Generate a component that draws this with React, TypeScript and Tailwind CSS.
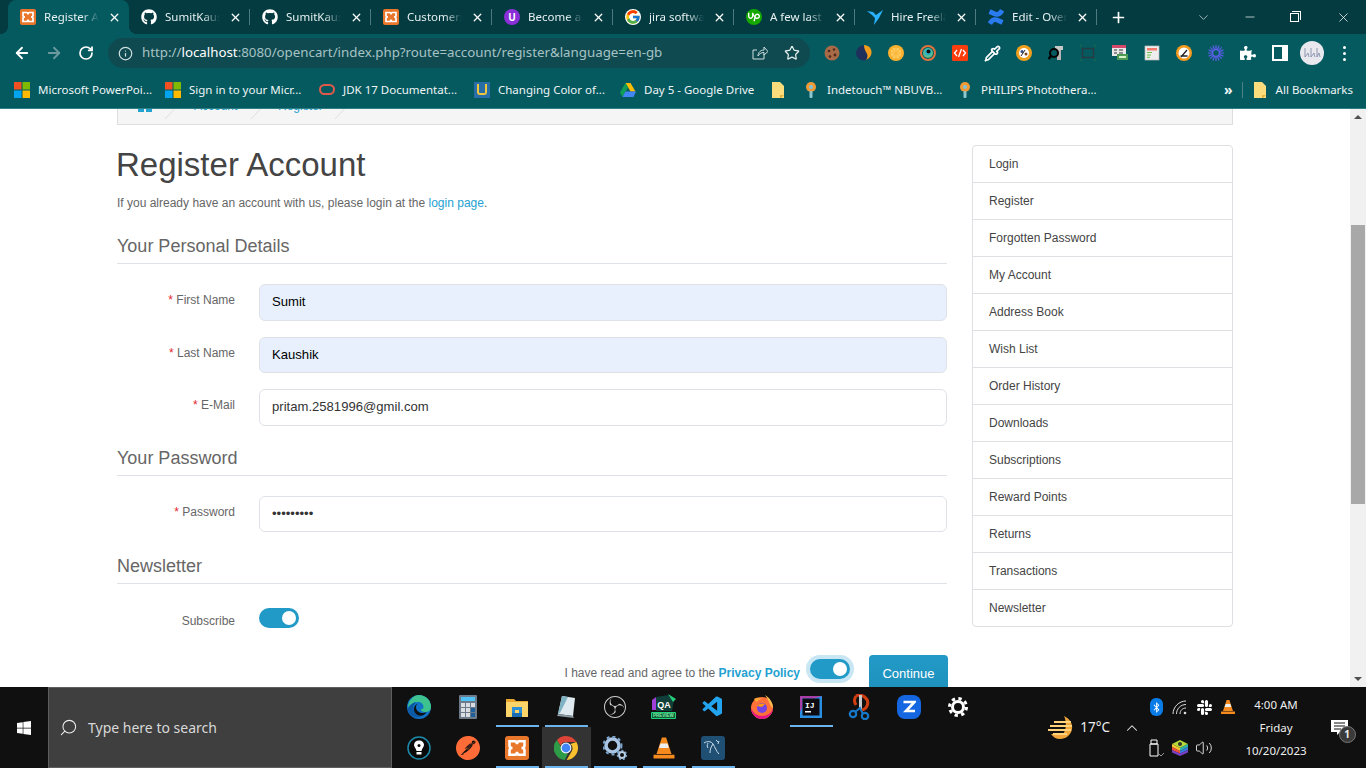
import { ArrowLeft, ArrowRight, ChevronDown, ChevronUp, Info, Minus, Pipette, Plus, RotateCw, Search, Star, Volume2, X } from 'lucide-react';
import type { ReactNode } from 'react';
import { FaBluetoothB, FaGithub, FaPuzzlePiece, FaWindows } from 'react-icons/fa';
import { FcGoogle } from 'react-icons/fc';
import { SiConfluence, SiObsstudio, SiPostman, SiSlack, SiUpwork } from 'react-icons/si';
import { VscVscode } from 'react-icons/vsc';

const Xampp = ({ size = 16 }: { size?: number }) => (
  <svg width={size} height={size} viewBox="0 0 16 16">
    <rect width="16" height="16" rx="2" fill="#e8762b" />
    <path
      d="M3 3.500h3.500c1 0 1.500 1 1.500 2 0-1 .5-2 1.500-2H13v3c0 .8-.8 1.500-2 1.500 1.200 0 2 .7 2 1.500v3H9.500c-1 0-1.500-1-1.500-2 0 1-.5 2-1.500 2H3v-3c0-.8.8-1.500 2-1.500-1.200 0-2-.7-2-1.500z"
      fill="none"
      stroke="#fff"
      strokeWidth="1.700"
    />
  </svg>
);

const Windows4 = () => (
  <svg width="16" height="16" viewBox="0 0 16 16">
    <rect x="0" y="0" width="7.500" height="7.500" fill="#f25022" />
    <rect x="8.500" y="0" width="7.500" height="7.500" fill="#7fba00" />
    <rect x="0" y="8.500" width="7.500" height="7.500" fill="#00a4ef" />
    <rect x="8.500" y="8.500" width="7.500" height="7.500" fill="#ffb900" />
  </svg>
);

const Folder = () => (
  <svg width="14" height="18" viewBox="0 0 14 18">
    <path d="M1 1h8l4 4v12H1z" fill="#fbdc7c" />
    <path d="M9 14h4l-3 3H9z" fill="#e3b23c" />
  </svg>
);

const Pin = () => (
  <svg width="14" height="18" viewBox="0 0 14 18">
    <circle cx="7" cy="6" r="5" fill="#f09a37" />
    <circle cx="7" cy="6" r="2" fill="#7fc4d8" />
    <rect x="5.500" y="10" width="3" height="7" rx="1" fill="#8fc7cf" />
  </svg>
);

const Cone = ({ size = 16 }: { size?: number }) => (
  <svg width={size} height={size} viewBox="0 0 16 16">
    <path d="M6.600 1h2.800l3.600 11H3z" fill="#f58a1f" />
    <path d="M5.600 5h4.800l.8 3H4.700z" fill="#eeeeee" />
    <path d="M1 12.500h14v2.500H1z" fill="#f58a1f" />
  </svg>
);

const Chrome = () => (
  <svg width="24" height="24" viewBox="0 0 24 24">
    <path d="M12 0a12 12 0 0 1 10.400 6H12a6 6 0 0 0-5.600 3.800L3 3.900A12 12 0 0 1 12 0z" fill="#db4437" />
    <path d="M22.400 6A12 12 0 0 1 12.600 24l5-8.600A6 6 0 0 0 16.500 8z" fill="#fbc02d" />
    <path d="M3 3.900l5.200 9A5 5 0 0 0 14 17.600L10.700 24A12 12 0 0 1 3 3.900z" fill="#2e9b46" />
    <circle cx="12" cy="12" r="5.400" fill="#fff" />
    <circle cx="12" cy="12" r="4.400" fill="#4285f4" />
  </svg>
);

const Edge = () => (
  <svg width="24" height="24" viewBox="0 0 24 24">
    <circle cx="12" cy="12" r="12" fill="#1073c8" />
    <path d="M12 0a12 12 0 0 1 12 12c0 4-3 5-6 5-2.600 0-4-1-4.500-3 1.500.5 3 0 3-2C16.500 9 14 7 11 7 6 7 3 10 1 13 1 6 6 0 12 0z" fill="#3ec28f" />
    <path d="M11 7c-3 0-5 3-4.500 7 .5 4 4 7 8 7-1.500 1-3 1.500-4.500 1.500C5 22.500.5 18 1 13c2-3 5-6 10-6z" fill="#0c59a4" />
    <path d="M9 12c0 3.500 3 6 6.500 6 1.500 0 3-.3 4-1-.8 2-3.500 4-6 3.800C9.500 20.500 6.500 17 7 13.500 7.300 11 9 9 11 8.500 9.800 9.500 9 10.500 9 12z" fill="#101010" />
  </svg>
);

const Explorer = () => (
  <svg width="22" height="20" viewBox="0 0 22 20">
    <path d="M0 2h8l2 2h12v4H0z" fill="#e8a72e" />
    <path d="M0 5h22v15H0z" fill="#fbd569" />
    <path d="M6 10h10v6h-3v-3H9v3H6z" fill="#2e8fd9" />
    <path d="M6 16h10v4H6z" fill="#1a6cb0" />
  </svg>
);

const Calc = () => (
  <svg width="18" height="24" viewBox="0 0 18 24">
    <rect width="18" height="24" rx="1" fill="#6c7a89" />
    <rect x="2" y="2" width="14" height="4" fill="#4fc3f7" />
    {[0, 1, 2].map((r) =>
      [0, 1, 2].map((c) => <rect key={`${r}${c}`} x={2 + c * 5} y={8 + r * 5} width="4" height="4" fill={c === 2 && r > 0 ? '#1f5f9c' : '#d8dee4'} />),
    )}
  </svg>
);

const Notepad = () => (
  <svg width="24" height="24" viewBox="0 0 24 24">
    <path d="M8 1l13 2-2 18-15-2z" fill="#dfeaf0" />
    <path d="M8 1l6 1-8 16-2 1z" fill="#7fb3c4" />
    <path d="M4 19l15 2 1 2-17-2z" fill="#8a9aa3" />
  </svg>
);

const Pen = () => (
  <svg width="24" height="24" viewBox="0 0 24 24">
    <circle cx="12" cy="12" r="11" fill="#0a0a0a" stroke="#1c8aa8" strokeWidth="1.500" />
    <path d="M12 4.500c3 0 5 2 5 4.500 0 2-2 3-2.500 6h-5C9 12 7 11 7 9c0-2.500 2-4.500 5-4.500z" fill="#fff" />
    <circle cx="12" cy="9.500" r="1.500" fill="#0a0a0a" />
    <rect x="9.500" y="16" width="5" height="2.500" fill="#fff" />
  </svg>
);

const Gears = () => (
  <svg width="24" height="24" viewBox="0 0 24 24">
    <circle cx="9.500" cy="9.500" r="6.500" fill="none" stroke="#a9c6e4" strokeWidth="3.500" />
    <circle cx="9.500" cy="9.500" r="9" fill="none" stroke="#7ba3cc" strokeWidth="2" strokeDasharray="3 3" />
    <circle cx="19" cy="19" r="3" fill="none" stroke="#b9d0e6" strokeWidth="2" />
    <circle cx="19" cy="19" r="4.500" fill="none" stroke="#7ba3cc" strokeWidth="1.500" strokeDasharray="2 2" />
  </svg>
);

const Qa = () => (
  <svg width="26" height="26" viewBox="0 0 26 26">
    <path d="M1 6l4-3v13H1z" fill="#a03fd8" />
    <path d="M5 3l13-2 5 5-2 11H5z" fill="#0f3f38" />
    <path d="M17 0l8 5-3 3z" fill="#26d07c" />
    <text x="13" y="14" textAnchor="middle" fontSize="9" fontWeight="700" fill="#fff" fontFamily="Liberation Sans">QA</text>
    <rect x="0" y="18" width="25" height="7" rx="1" fill="#21d07a" />
    <rect x="1" y="19" width="23" height="5" fill="#0f5f38" />
    <text x="12.500" y="23.300" textAnchor="middle" fontSize="4.500" fontWeight="700" fill="#7ff0a8" fontFamily="Liberation Sans">PREVIEW</text>
  </svg>
);

const Firefox = () => (
  <svg width="24" height="24" viewBox="0 0 24 24">
    <circle cx="12" cy="13" r="11" fill="#ff7139" />
    <path d="M1 13c0 6 5 11 11 11s11-5 11-11c-1 5-6 8-11 8S3 18 1 13z" fill="#e31587" />
    <path d="M15 0c5 3 8 8 8 13-3-1-3-6-8-13z" fill="#ffbd4f" />
    <path d="M4 4c2-1 5-2 8 0-3 0-4 2-5 3-1 0-2-1-3-3z" fill="#ffa436" />
    <circle cx="12" cy="13" r="5" fill="#7542e5" />
    <path d="M7 11c2-3 6-3 8-2l-3 3z" fill="#ff980e" />
  </svg>
);

const Idea = () => (
  <svg width="22" height="22" viewBox="0 0 22 22">
    <rect width="22" height="22" fill="#2a8fe0" />
    <path d="M0 0h22l-8 2.500H2.500V11L0 16z" fill="#a83fa8" />
    <rect x="2.500" y="2.500" width="17" height="17" fill="#0c0c10" />
    <rect x="5" y="15" width="6" height="1.500" fill="#fff" />
    <text x="5" y="11.500" fontSize="8" fontWeight="700" fill="#fff" fontFamily="Liberation Mono">IJ</text>
  </svg>
);

const Snip = () => (
  <svg width="24" height="26" viewBox="0 0 24 26">
    <path d="M8 2c6-3 14 3 11 10-1 2-3 4-6 4" fill="none" stroke="#cf3d10" strokeWidth="3" />
    <path d="M8 2c-2 3-2 6 0 9" fill="none" stroke="#cf3d10" strokeWidth="3" />
    <path d="M11 1h3v14h-3z" fill="#c9c9c9" />
    <circle cx="5" cy="20" r="3.200" fill="none" stroke="#1878c8" strokeWidth="2.200" />
    <circle cx="17" cy="22" r="3.200" fill="none" stroke="#1878c8" strokeWidth="2.200" />
    <path d="M7 18l5-4 3 6" fill="none" stroke="#1878c8" strokeWidth="2" />
  </svg>
);

const Zoho = () => (
  <span className="flex h-6 w-6 items-center justify-center rounded-[8px] bg-[#1467e0]">
    <svg width="14" height="14" viewBox="0 0 14 14">
      <path d="M1.500 2h11L4 11h9" fill="none" stroke="#fff" strokeWidth="2.600" />
    </svg>
  </span>
);

const Gear = () => (
  <svg width="20" height="20" viewBox="0 0 20 20">
    <circle cx="10" cy="10" r="5.500" fill="none" stroke="#fff" strokeWidth="3" />
    <circle cx="10" cy="10" r="8.500" fill="none" stroke="#fff" strokeWidth="3" strokeDasharray="3.300 3.400" />
  </svg>
);

const Dolphin = () => (
  <span className="flex h-6 w-6 items-center justify-center rounded-[3px] bg-[#1f4f73]">
    <svg width="20" height="20" viewBox="0 0 20 20">
      <path d="M1 5c3-2 7-2 9 1 2 3 3 7 6 10M10 6c-2 3-3 5-3 9M5 5c-1 2-1 4 0 5M13 2l3 3M16 3l-1 3" fill="none" stroke="#c8dbe8" strokeWidth="1" />
    </svg>
  </span>
);

const Extension = ({ children }: { children: ReactNode }) => (
  <svg width="16" height="16" viewBox="0 0 16 16">
    {children}
  </svg>
);

const extensionIcons = [
  <Extension key="cookie">
    <circle cx="8" cy="8" r="7.500" fill="#a86a47" />
    <circle cx="5" cy="6" r="1.300" fill="#4a2a1c" />
    <circle cx="10" cy="4.500" r="1.200" fill="#4a2a1c" />
    <circle cx="11" cy="10" r="1.400" fill="#4a2a1c" />
    <circle cx="6" cy="11.500" r="1.300" fill="#4a2a1c" />
  </Extension>,
  <Extension key="sync">
    <circle cx="7.500" cy="8" r="7.500" fill="#20305c" />
    <path d="M8 0c5 0 8 4 7.500 8S12 14 10 15c2-3 2-5 0-8-1-2-2-4-2-7z" fill="#f59d1c" />
  </Extension>,
  <Extension key="orange">
    <circle cx="8" cy="8" r="8" fill="#fbb02d" />
    <circle cx="8" cy="8" r="5.500" fill="#ffc95c" />
    <path d="M8 2v12M2 8h12M4 4l8 8M12 4l-8 8" stroke="#fbb02d" strokeWidth=".7" />
  </Extension>,
  <Extension key="ring">
    <circle cx="8" cy="8" r="7" fill="none" stroke="#e2713d" strokeWidth="2" />
    <circle cx="8" cy="8" r="5" fill="#5fb98a" />
    <circle cx="8" cy="7" r="3.500" fill="#27b6c6" />
    <circle cx="8.500" cy="6.500" r="2" fill="#111" />
  </Extension>,
  <Extension key="code">
    <rect width="16" height="16" rx="1.500" fill="#fb3d0e" />
    <path d="M5 5L2.500 8 5 11M11 5l2.500 3-2.500 3M9.500 4l-3 8" fill="none" stroke="#fff" strokeWidth="1.300" />
  </Extension>,
  <span key="pipette" className="text-white">
    <Pipette size={17} strokeWidth={2.4} />
  </span>,
  <Extension key="palette">
    <circle cx="8" cy="8" r="8" fill="#f0a01c" />
    <circle cx="8" cy="8" r="5" fill="#fff" />
    <circle cx="6" cy="6.500" r="1.500" fill="#344a86" />
    <circle cx="10" cy="9" r="1.500" fill="#7a4420" />
    <path d="M5 11l4-6" stroke="#222" strokeWidth="1" />
  </Extension>,
  <Extension key="magnifier">
    <rect x="7" y="1" width="8" height="4" fill="#c8c8c8" />
    <rect x="9" y="5" width="4" height="10" fill="#b5b5b5" />
    <circle cx="6" cy="8" r="4" fill="#055a60" stroke="#000" strokeWidth="2" />
    <path d="M3 11l-2.500 3" stroke="#000" strokeWidth="2.400" />
  </Extension>,
  <Extension key="frame">
    <rect x="2.500" y="3.500" width="11" height="9" fill="none" stroke="#263c40" strokeWidth="1.500" />
    <path d="M0 3V0h3M13 0h3v3M0 13v3h3M13 16h3v-3" fill="none" stroke="#1d6b45" strokeWidth="1" />
  </Extension>,
  <Extension key="table">
    <rect x="0" y="0" width="14" height="11" fill="#e9e9e9" />
    <rect x="0" y="0" width="14" height="3" fill="#d4486a" />
    <path d="M2 5h3M7 5h4M2 8h3M7 8h4" stroke="#333" strokeWidth="1.200" />
    <rect x="5" y="9" width="11" height="6" fill="#4a9a55" />
    <rect x="7" y="11" width="7" height="2" fill="#d8f0c8" />
  </Extension>,
  <Extension key="note">
    <rect x="1" y="1" width="14" height="14" fill="#eee" stroke="#bbb" strokeWidth=".7" />
    <rect x="3" y="3" width="10" height="2.500" fill="#f47a6e" />
    <path d="M3 7.500h5M3 10h4M3 12.300h3" stroke="#6abf4b" strokeWidth="1" />
  </Extension>,
  <Extension key="badge">
    <circle cx="8" cy="8" r="8" fill="#f59a1c" />
    <circle cx="8" cy="8" r="5.500" fill="#fff" />
    <path d="M5 12l6-7M4.500 11h7" stroke="#222" strokeWidth="1.300" />
  </Extension>,
  <Extension key="spark">
    <path d="M8 0v16M0 8h16M2.300 2.300l11.400 11.400M13.700 2.300L2.300 13.700M4.900.6l6.200 14.800M11.100.6L4.900 15.400M.6 4.900l14.800 6.200M.6 11.100l14.800-6.200" stroke="#5a5fe8" strokeWidth="1.200" />
    <circle cx="8" cy="8" r="3.500" fill="#055a60" stroke="#5a5fe8" strokeWidth="1.500" />
  </Extension>,
  <FaPuzzlePiece key="puzzle" className="text-white" size={16} />,
  <span key="panel" className="flex h-[16px] w-[16px] justify-start border-[2px] border-r-[6px] border-white" />,
  <span key="avatar" className="flex h-6 w-6 items-center justify-center rounded-full bg-[#e8e8ee]">
    <svg width="18" height="12" viewBox="0 0 18 12">
      <path d="M2 1v9l3-4 1 4M8 1v9l3-4 1 4M14 1v9l2-4 1 4" fill="none" stroke="#7a86a6" strokeWidth=".8" />
    </svg>
  </span>,
  <span key="dots" className="flex flex-col gap-[3px]">
    <span className="h-[3px] w-[3px] rounded-full bg-white" />
    <span className="h-[3px] w-[3px] rounded-full bg-white" />
    <span className="h-[3px] w-[3px] rounded-full bg-white" />
  </span>,
];

const tabs: { title: string; icon: ReactNode }[] = [
  { title: 'Register Account', icon: <Xampp /> },
  { title: 'SumitKaushik', icon: <FaGithub size={16} className="text-white" /> },
  { title: 'SumitKaushik', icon: <FaGithub size={16} className="text-white" /> },
  { title: 'Customers', icon: <Xampp /> },
  {
    title: 'Become a',
    icon: (
      <span className="flex h-4 w-4 items-center justify-center rounded-full bg-[#8b2fd8] text-[10px] font-bold text-white">
        U
      </span>
    ),
  },
  { title: 'jira software', icon: <FcGoogle size={16} className="rounded-full bg-white" /> },
  {
    title: 'A few last',
    icon: (
      <span className="flex h-4 w-4 items-center justify-center rounded-full bg-[#14a800]">
        <SiUpwork size={12} className="text-white" />
      </span>
    ),
  },
  {
    title: 'Hire Freelancers',
    icon: (
      <svg width="16" height="16" viewBox="0 0 16 16">
        <path d="M0 2l6 1 3 3 7-5-4 8-5 7 1-7-3-3z" fill="#29b2fe" />
      </svg>
    ),
  },
  { title: 'Edit - Overview', icon: <SiConfluence size={16} className="text-[#2a7bf0]" /> },
];

const bookmarks: { title: string; icon: ReactNode; w: string }[] = [
  { title: 'Microsoft PowerPoi...', icon: <Windows4 />, w: 'w-[151px]' },
  { title: 'Sign in to your Micr...', icon: <Windows4 />, w: 'w-[154px]' },
  {
    title: 'JDK 17 Documentat...',
    icon: <span className="h-[11px] w-4 rounded-full border-2 border-[#e2594b]" />,
    w: 'w-[155px]',
  },
  {
    title: 'Changing Color of...',
    icon: (
      <span className="flex h-4 w-4 justify-center bg-[#2a6ea8] pt-[2px]">
        <span className="h-[11px] w-[10px] rounded-b-[3px] border-x-2 border-b-2 border-[#f0c63a]" />
      </span>
    ),
    w: 'w-[146px]',
  },
  {
    title: 'Day 5 - Google Drive',
    icon: (
      <svg width="16" height="14" viewBox="0 0 16 14">
        <path d="M5.500 0h5l5 8.500h-5z" fill="#fbbc04" />
        <path d="M5.500 0L0 9.500 2.500 14l5.500-9.500z" fill="#0f9d58" />
        <path d="M2.500 14h11l2.500-5.500H5.500z" fill="#4285f4" />
      </svg>
    ),
    w: 'w-[150px]',
  },
  { title: '', icon: <Folder />, w: 'w-[33px]' },
  { title: 'Indetouch™ NBUVB...', icon: <Pin />, w: 'w-[154px]' },
  { title: 'PHILIPS Photothera...', icon: <Pin />, w: 'w-[267px]' },
];

const taskIcons: { icon: ReactNode; bar?: boolean; active?: boolean }[] = [
  { icon: <Edge /> },
  { icon: <Calc /> },
  { icon: <Explorer />, bar: true },
  { icon: <Notepad />, bar: true },
  { icon: <SiObsstudio size={22} className="text-[#cfcfcf]" /> },
  { icon: <Qa /> },
  { icon: <VscVscode size={24} className="text-[#23a4ee]" /> },
  { icon: <Firefox /> },
  { icon: <Idea />, bar: true },
  { icon: <Snip /> },
  { icon: <Zoho /> },
  { icon: <Gear /> },
  { icon: <Pen /> },
  { icon: <SiPostman size={24} className="text-[#ff6c37]" /> },
  { icon: <Xampp size={24} />, bar: true },
  { icon: <Chrome />, bar: true, active: true },
  { icon: <Gears />, bar: true },
  { icon: <Cone size={24} />, bar: true },
  { icon: <Dolphin />, bar: true },
];

const sideLinks = [
  'Login',
  'Register',
  'Forgotten Password',
  'My Account',
  'Address Book',
  'Wish List',
  'Order History',
  'Downloads',
  'Subscriptions',
  'Reward Points',
  'Returns',
  'Transactions',
  'Newsletter',
];

function Legend({ title, className }: { title: string; className: string }) {
  return (
    <div className={`border-b border-[#dee2e6] pb-[5px] text-[18px] leading-[24px] text-[#666] ${className}`}>{title}</div>
  );
}

function Field({ label, value, type = 'text', filled = false }: { label: string; value: string; type?: string; filled?: boolean }) {
  return (
    <div className="mb-[16px] flex gap-[24px]">
      <label className="w-[118px] pt-[7px] text-right text-[12px] leading-[18px] text-[#666]">
        <span className="text-[#e3262e]">* </span>
        {label}
      </label>
      <input
        readOnly
        type={type}
        defaultValue={value}
        className={`h-[36.5px] flex-1 rounded-[6px] border border-[#dee2e6] px-[12px] pb-[1px] text-[13.1px] ${filled ? 'bg-[#e8f0fe] text-black' : 'bg-white text-[#333]'}`}
      />
    </div>
  );
}

function Toggle({ ring = false }: { ring?: boolean }) {
  return (
    <span className={`flex h-5 w-10 items-center justify-end rounded-full bg-[#229ac8] px-[3px] ${ring ? 'shadow-[0_0_0_4px_#c8e6f3]' : ''}`}>
      <span className="h-[14px] w-[14px] rounded-full bg-white" />
    </span>
  );
}

export default function App() {
  return (
    <div className="flex h-[768px] w-[1366px] flex-col overflow-hidden bg-white font-['Liberation_Sans',Arial,sans-serif]">
      {/* browser chrome */}
      <div className="font-['Noto_Sans',sans-serif] text-white">
        <div className="flex h-[34px] items-center bg-[#033b41] pl-[8px]">
          {tabs.map((tab, i) => (
            <div
              key={i}
              className={`relative flex h-[34px] w-[121px] items-center pl-[12px] ${i === 0 ? 'rounded-t-[8px] bg-[#055a60]' : ''}`}
            >
              {i === 0 && (
                <>
                  <span className="absolute -left-2 bottom-0 h-2 w-2 bg-[radial-gradient(circle_at_0_0,transparent_8px,#055a60_8px)]" />
                  <span className="absolute -right-2 bottom-0 h-2 w-2 bg-[radial-gradient(circle_at_100%_0,transparent_8px,#055a60_8px)]" />
                </>
              )}
              <span className="flex w-4 shrink-0 items-center justify-center">{tab.icon}</span>
              <span className="ml-[8px] w-[58px] overflow-hidden whitespace-nowrap text-[11.5px] text-[#e6f0f0] [mask-image:linear-gradient(to_right,black_65%,transparent_95%)]">
                {tab.title}
              </span>
              <X size={13} strokeWidth={2.4} className="ml-[6px] shrink-0 text-white" />
              <span className={`ml-auto h-[16px] w-px ${i > 0 ? 'bg-[#4d7a7e]' : ''}`} />
            </div>
          ))}
          <Plus size={17} strokeWidth={2.4} className="ml-[13px]" />
          <ChevronDown size={15} strokeWidth={1.2} className="ml-[69px] text-[#cfdfe0]" />
          <Minus size={14} strokeWidth={1.2} className="ml-[32px]" />
          <span className="relative ml-[33px] h-[9px] w-[9px] border border-white after:absolute after:-right-[3px] after:-top-[3px] after:h-[9px] after:w-[9px] after:border-r after:border-t after:border-white" />
          <X size={15} strokeWidth={1.2} className="ml-[37px]" />
        </div>

        <div className="flex h-[38px] items-center bg-[#055a60] pl-[13px]">
          <ArrowLeft size={18} strokeWidth={2.4} />
          <ArrowRight size={18} strokeWidth={2.4} className="ml-[14px] text-[#6c9a9e]" />
          <RotateCw size={16} strokeWidth={2.6} className="ml-[15px]" />
          <div className="ml-[14px] flex h-[30px] w-[702px] items-center rounded-full bg-[#0f4a50] pl-[10px] pr-[10px]">
            <Info size={15} className="text-[#cfdfe0]" />
            <span className="ml-[9px] whitespace-nowrap text-[13.3px] text-[#a6c2c4]">
              http://<span className="text-white">localhost</span>:8080/opencart/index.php?route=account/register&amp;language=en-gb
            </span>
            <svg width="16" height="16" viewBox="0 0 16 16" className="ml-auto text-[#cfdfe0]">
              <path d="M12 9v5H1V5h4M6 11c0-4 3-6 6-6V2l4 4.500L12 10V7.500C9 7.500 7 9 6 11z" fill="none" stroke="currentColor" />
            </svg>
            <Star size={16} strokeWidth={1.8} className="ml-[16px] text-[#e6f0f0]" />
          </div>
          <div className="ml-[6px] flex">
            {extensionIcons.map((icon, i) => (
              <span key={i} className="flex h-[30px] w-8 items-center justify-center">
                {icon}
              </span>
            ))}
          </div>
        </div>

        <div className="flex h-[37px] items-center border-b border-[#2e7f85] bg-[#055a60] pb-[1px] pl-[14px] text-[11.5px] text-[#eef5f5]">
          {bookmarks.map((b, i) => (
            <div key={i} className={`flex items-center gap-[8px] ${b.w}`}>
              <span className="flex w-4 shrink-0 items-center justify-center">{b.icon}</span>
              <span className="whitespace-nowrap">{b.title}</span>
            </div>
          ))}
          <span className="text-[14px] font-bold">»</span>
          <span className="ml-[9px] h-[16px] w-px bg-[#4d8287]" />
          <span className="ml-[10px]">
            <Folder />
          </span>
          <span className="ml-[9px] whitespace-nowrap">All Bookmarks</span>
        </div>
      </div>

      {/* page */}
      <div className="flex min-h-0 flex-1">
        <div className="min-w-0 flex-1 overflow-hidden">
          <div className="mx-[117px]">
            <div className="-mt-[32px] flex h-[48px] items-center border border-[#dedede] bg-[#f5f5f5] pl-[20px] pt-[10px] text-[12px] text-[#23a1d1]">
              <span className="flex w-[27px] gap-[2px] self-end pb-[12px]">
                <span className="h-[4px] w-[6px] bg-[#23a1d1]" />
                <span className="h-[4px] w-[6px] bg-[#23a1d1]" />
              </span>
              <svg width="16" height="16" viewBox="0 0 16 16" className="-mb-[10px]">
                <path d="M15 0L0 16" stroke="#dedede" />
              </svg>
              <span className="ml-[13px] w-[57px]">Account</span>
              <svg width="16" height="16" viewBox="0 0 16 16" className="-mb-[10px]">
                <path d="M15 0L0 16" stroke="#dedede" />
              </svg>
              <span className="ml-[11px] w-[57px]">Register</span>
              <svg width="16" height="16" viewBox="0 0 16 16" className="-mb-[10px]">
                <path d="M15 0L0 16" stroke="#dedede" />
              </svg>
            </div>

            <div className="mt-[20px] flex gap-[25px]">
              <div className="w-[830px]">
                <h1 className="-ml-[1px] mt-[1px] text-[33px] leading-[38px] text-[#444]">Register Account</h1>
                <p className="mt-[10px] text-[12px] leading-[18px] text-[#666]">
                  If you already have an account with us, please login at the <span className="text-[#23a1d1]">login page</span>.
                </p>
                <Legend title="Your Personal Details" className="mt-[22px] mb-[20px]" />
                <Field label="First Name" value="Sumit" filled />
                <Field label="Last Name" value="Kaushik" filled />
                <Field label="E-Mail" value="pritam.2581996@gmil.com" />
                <Legend title="Your Password" className="mt-[20px] mb-[20px]" />
                <Field label="Password" value="123456789" type="password" />
                <Legend title="Newsletter" className="mt-[22px] mb-[24px]" />
                <div className="flex gap-[24px]">
                  <label className="w-[118px] pt-[4px] text-right text-[12px] leading-[18px] text-[#666]">Subscribe</label>
                  <Toggle />
                </div>
                <div className="mt-[25px] flex items-start justify-end">
                  <span className="mt-[9px] text-[12px] leading-[18px] text-[#666]">
                    I have read and agree to the <span className="font-bold text-[#23a1d1]">Privacy Policy</span>
                  </span>
                  <span className="ml-[10px] mt-[4px]">
                    <Toggle ring />
                  </span>
                  <button className="-mr-[1px] ml-[19px] h-[38px] w-[79px] rounded-[4px] bg-gradient-to-b from-[#229ac8] to-[#1f90bb] text-[13px] text-white">
                    Continue
                  </button>
                </div>
              </div>

              <div className="h-[482px] w-[261px] overflow-hidden rounded-[4px] border border-[#dedfe3] text-[12px] text-[#444]">
                {sideLinks.map((link, i) => (
                  <div key={link} className={`flex items-center pl-[16px] ${i === 0 ? 'h-[36px]' : 'h-[37px] border-t border-[#dedfe3]'}`}>
                    {link}
                  </div>
                ))}
              </div>
            </div>
          </div>
        </div>

        {/* scrollbar */}
        <div className="flex w-4 flex-col items-center bg-[#f1f1f1]">
          <span className="mt-[6px] h-0 w-0 border-x-[4px] border-b-[4px] border-x-transparent border-b-[#505050]" />
          <span className="mt-[106px] h-[279px] w-[14px] bg-[#a8a8a8]" />
          <span className="mt-auto mb-[6px] h-0 w-0 border-x-[4px] border-t-[4px] border-x-transparent border-t-[#505050]" />
        </div>
      </div>

      {/* taskbar */}
      <div className="flex h-[81px] bg-[#101010] font-['Noto_Sans',sans-serif] text-[#eee]">
        <div className="flex w-[48px] items-center justify-center text-white">
          <FaWindows size={16} />
        </div>
        <div className="flex w-[344px] items-center gap-[10px] border border-[#5e5e5e] bg-[#3f3f3f] pl-[10px]">
          <Search size={19} strokeWidth={1.3} className="-scale-x-100" />
          <span className="text-[14px] text-[#d8d8d8]">Type here to search</span>
        </div>
        <div className="ml-[2.5px] grid w-[588px] grid-cols-[repeat(12,49px)] grid-rows-[40px_41px]">
          {taskIcons.map((t, i) => (
            <div key={i} className={`relative flex items-center justify-center ${t.active ? 'bg-[#333]' : ''}`}>
              {t.icon}
              {t.bar && <span className="absolute bottom-0 left-[3px] right-[3px] h-[2px] bg-[#6cb4ee]" />}
            </div>
          ))}
        </div>
        <div className="ml-auto flex items-center">
          <svg width="26" height="24" viewBox="0 0 26 24">
            <path d="M16 0c6 3 9 8 8 13-1 6-6 10-12 10-4 0-7-2-9-5h12c3-3 4-12 1-18z" fill="#f0a63a" />
            <path d="M6 6h17M2 10h22M0 14h23M5 18h14" stroke="#ffd27a" strokeWidth="1.800" />
          </svg>
          <span className="ml-[6px] text-[13.5px]">17°C</span>
          <span className="ml-[10px] flex w-[24px] justify-center">
            <ChevronUp size={18} strokeWidth={1.4} />
          </span>
          <div className="grid w-[96px] grid-cols-[repeat(4,24px)] grid-rows-[40px_41px] justify-items-center">
            <span className="flex items-center">
              <span className="flex h-[18px] w-[13px] items-center justify-center rounded-[6px] bg-[#0a7ce8]">
                <FaBluetoothB size={11} className="text-white" />
              </span>
            </span>
            <span className="flex items-center">
              <svg width="16" height="16" viewBox="0 0 16 16">
                <path d="M1 15c0-7 6-13 13-13M4.500 15c0-5 4-9.500 9.500-9.500M8 15c0-3.500 2.500-6 6-6" fill="none" stroke="#ddd" strokeWidth="1" />
                <circle cx="13" cy="14" r="1.300" fill="#ddd" />
              </svg>
            </span>
            <span className="flex items-center">
              <SiSlack size={15} className="text-white" />
            </span>
            <span className="flex items-center">
              <Cone />
            </span>
            <span className="flex items-center">
              <svg width="16" height="18" viewBox="0 0 16 18">
                <path d="M3 1h6v4H3zM2 5h8v12H2z" fill="none" stroke="#fff" />
                <path d="M11 15l2 2 3-3" fill="none" stroke="#bbb" strokeWidth=".8" />
              </svg>
            </span>
            <span className="flex items-center">
              <svg width="16" height="16" viewBox="0 0 16 16">
                <path d="M8 0l8 4-8 4-8-4z" fill="#b3d93a" />
                <path d="M0 4l8 4v3L0 7z" fill="#f4c430" />
                <path d="M16 4L8 8v3l8-4z" fill="#2fb3a8" />
                <path d="M0 7l8 4v2.500L0 10z" fill="#f0503c" />
                <path d="M16 7l-8 4v2.500L16 10z" fill="#3a7be0" />
                <path d="M0 10l8 3.500V16L0 12.500zM16 10l-8 3.500V16l8-3.500z" fill="#7a3fc8" />
                <circle cx="8" cy="4" r="2" fill="#333" />
              </svg>
            </span>
            <span className="flex items-center">
              <Volume2 size={18} strokeWidth={1.2} />
            </span>
          </div>
          <div className="flex w-[72px] flex-col items-center gap-[5px] text-[11.5px] leading-[18px]">
            <span>4:00 AM</span>
            <span>Friday</span>
            <span>10/20/2023</span>
          </div>
          <div className="ml-[12px] mr-[12px] flex w-[30px] justify-center">
            <span className="relative">
              <svg width="17" height="16" viewBox="0 0 17 16">
                <path d="M0 0h17v12H9l-3 3v-3H0z" fill="#fff" />
                <path d="M3 3h11M3 6h11M3 9h7" stroke="#101010" />
              </svg>
              <span className="absolute -bottom-[7px] -right-[8px] flex h-[17px] w-[17px] items-center justify-center rounded-full border border-[#777] bg-[#3a3a3a] text-[10px] font-bold">
                1
              </span>
            </span>
          </div>
        </div>
      </div>
    </div>
  );
}
